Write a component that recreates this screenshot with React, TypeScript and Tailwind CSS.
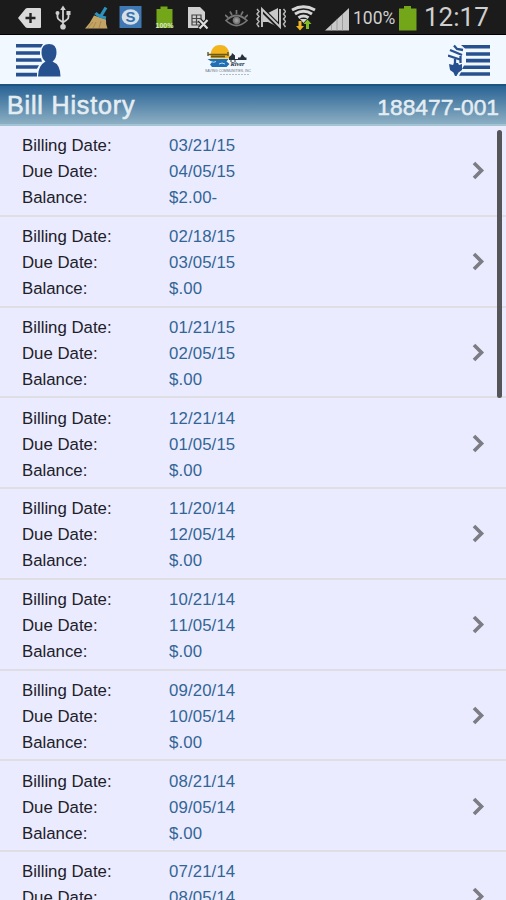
import React from 'react';

interface Bill {
  billingDate: string;
  dueDate: string;
  balance: string;
}

const bills: Bill[] = [
  { billingDate: '03/21/15', dueDate: '04/05/15', balance: '$2.00-' },
  { billingDate: '02/18/15', dueDate: '03/05/15', balance: '$.00' },
  { billingDate: '01/21/15', dueDate: '02/05/15', balance: '$.00' },
  { billingDate: '12/21/14', dueDate: '01/05/15', balance: '$.00' },
  { billingDate: '11/20/14', dueDate: '12/05/14', balance: '$.00' },
  { billingDate: '10/21/14', dueDate: '11/05/14', balance: '$.00' },
  { billingDate: '09/20/14', dueDate: '10/05/14', balance: '$.00' },
  { billingDate: '08/21/14', dueDate: '09/05/14', balance: '$.00' },
  { billingDate: '07/21/14', dueDate: '08/05/14', balance: '$.00' },
];

function StatusIcons() {
  return (
    <>
      {/* back tag */}
      <svg className="ml-[18px] h-[35px] w-6 shrink-0" viewBox="0 0 24 35">
        <path d="M0 18 7.5 8.8Q8.3 8 9.5 8H22q1 0 1 1v18q0 1-1 1H9.5q-1.2 0-2-.8Z" fill="#d9d9d9" />
        <path d="M12.5 13v10M7.5 18h10" stroke="#222" strokeWidth="2.4" />
      </svg>
      {/* usb */}
      <svg className="ml-[13px] h-[35px] w-4 shrink-0" viewBox="0 0 16 35" fill="none" stroke="#d0d0d0" strokeWidth="1.8">
        <path d="M8 9v18M2.5 14v3q0 2 2 3L8 22.5l3.5-2.5q2-1 2-3v-3" />
        <path d="m8 5.5 2.8 4.5H5.2Z" fill="#d0d0d0" stroke="none" />
        <circle cx="8" cy="26.8" r="2.8" fill="#d0d0d0" stroke="none" />
        <circle cx="2.5" cy="13" r="2" fill="#d0d0d0" stroke="none" />
        <path d="M11.5 11h4v4h-4z" fill="#d0d0d0" stroke="none" />
      </svg>
      {/* broom */}
      <svg className="ml-3.5 h-[35px] w-6 shrink-0" viewBox="0 0 24 35">
        <path d="M9 15.5 21 19.5q-.5 5 1.5 9H0q5-5 9-13Z" fill="#c4a464" />
        <path d="m8 28 3-6M14 28l2-7M3 28l5-6" stroke="#9d8048" strokeWidth="0.8" />
        <path d="m21 7.5-5.5 9M10.5 13q3 3.5 10.5 5" stroke="#2b91be" strokeWidth="3.2" fill="none" />
      </svg>
      {/* S badge */}
      <svg className="ml-[10px] h-[35px] w-[23px] shrink-0" viewBox="0 0 23 35">
        <path d="M.5 6h22v22H.5z" fill="#3f78b5" />
        <ellipse cx="11.5" cy="17" rx="8.8" ry="7.8" fill="#d5dfe6" />
        <text x="11.5" y="22.2" textAnchor="middle" fontFamily="Liberation Sans" fontWeight="700" fontSize="15" fill="#3470ae">S</text>
      </svg>
      {/* battery app */}
      <svg className="ml-[13px] h-[35px] w-[19px] shrink-0" viewBox="0 0 19 35">
        <path d="M1.5 9h4V6.5h7V9h5v19h-16z" fill="#74a619" />
        <text x="9.5" y="28" textAnchor="middle" fontFamily="Liberation Sans" fontWeight="700" fontSize="7" fill="#dce8c8">100%</text>
      </svg>
      {/* sim card with cross */}
      <svg className="ml-3.5 h-[35px] w-[21px] shrink-0" viewBox="0 0 21 35">
        <path d="M0 7h12l5 5v9l-5 7H0z" fill="#d0d0d0" />
        <path d="M4 15h9v10H4zM4 18.5h9M4 22h9M8.5 15v10" stroke="#444" fill="none" strokeWidth="1.2" />
        <path d="m11.5 20 8 8.5M19.5 20l-8 8.5" stroke="#1b1b1b" strokeWidth="4.5" />
        <path d="m11.5 20 8 8.5M19.5 20l-8 8.5" stroke="#ddd" strokeWidth="2.2" />
      </svg>
      {/* eye */}
      <svg className="ml-4 h-[35px] w-[23px] shrink-0" viewBox="0 0 23 35" fill="none" stroke="#777" strokeWidth="1.7">
        <path d="M1 20.5q10.5-10 21 0-10.5 10-21 0ZM11.5 10v4M5 11.5l2 3.5M18 11.5 16 15M0 15l3 2.5M23 15l-3 2.5" />
        <circle cx="11.5" cy="20.5" r="3" fill="#999" />
      </svg>
      {/* vibrate and mute */}
      <svg className="ml-[8px] h-[35px] w-[30px] shrink-0" viewBox="0 0 30 35" fill="none" stroke="#b8b8b8">
        <path d="m1 9 2 2.5L1 14l2 2.5L1 19l2 2.5L1 24l2 3M27.5 9l2 2.5-2 2.5 2 2.5-2 2.5 2 2.5-2 2.5 2 3" strokeWidth="1.5" />
        <path d="M7 13h5l10-5v19l-10-5H7z" fill="#c8c8c8" stroke="none" />
        <path d="m5.5 9 19 19" stroke="#1b1b1b" strokeWidth="5" />
        <path d="M6 27V9l18 18V9" stroke="#c8c8c8" strokeWidth="1.9" />
      </svg>
      {/* wifi */}
      <svg className="ml-[5px] h-[35px] w-[25px] shrink-0" viewBox="0 0 25 35" fill="none" stroke="#d6d6d6" strokeWidth="3">
        <path d="M1 10q11.5-6.5 23 0M4 14q8.5-5.5 17 0M7.5 17.7q5-3.5 10 0" />
        <path d="M9 19h7l-3.5 4z" fill="#d6d6d6" stroke="none" />
        <path d="M7.5 21h3v5H13l-4 4.5L5 26h2.5z" fill="#eeb620" stroke="none" />
        <path d="M15 29v-5h-2.5l4-4.5 4 4.5H18v5z" fill="#83bd25" stroke="none" />
      </svg>
      {/* signal */}
      <svg className="ml-[9px] h-[35px] w-6 shrink-0" viewBox="0 0 24 35">
        <path d="M0 30.5 24 8v22.5z" fill="#c9c9c9" />
        <path d="M6.5 24v7M12 19v12M17.5 14v17" stroke="#8a8a8a" strokeWidth="0.7" />
      </svg>
    </>
  );
}

function StatusBar() {
  return (
    <div className="flex h-[35px] shrink-0 items-center border-b border-black bg-[#1b1b1b] text-[#cfcfcf]">
      <StatusIcons />
      <span className="ml-[4px] w-[44px] pt-[3px] font-['Roboto'] text-[17.5px] leading-none whitespace-nowrap">100%</span>
      <svg className="ml-[2px] h-[35px] w-[18px] shrink-0" viewBox="0 0 18 35">
        <path d="M0 8.5h5V6h7v2.5h5.5v22H0z" fill="#74a619" />
      </svg>
      <span className="ml-[7px] font-['Roboto'] text-[26px] leading-none whitespace-nowrap">12:17</span>
    </div>
  );
}

function AccountIcon() {
  return (
    <svg className="h-[34px] w-[45px]" viewBox="0 0 45 34" fill="#27508f">
      <path d="M0 0h27l-2 3.6H0zM0 7.2h24v3.6H0zM0 14.2h25l1 3.6H0zM0 21.2h23l-2 3.6H0zM0 28.8h21v3.6H0z" />
      <path d="M22 32.4q0-11 7.5-15-4-3-4-9 0-8.400 7.5-8.400t7.5 8.400q0 6-4 9 8 3 8 15z" />
    </svg>
  );
}

function MenuIcon() {
  return (
    <svg className="h-[34px] w-[44px]" viewBox="0 0 44 34" fill="#27508f">
      <path d="M13 1h29v3.600H17zM18 8.200h24v3.600H18zM18 14.800h24v3.600H18zM16 21.500h26v3.600H14zM13 28.200h29v3.600H11z" />
      <path d="M1 20l4 1 1-2h4l1 2 3-1v6l-3.500 2.500-2 3.500H7l-1.500-3.500L2 26z" />
      <path d="M6 1.500l3 3.500 6 1M2 6l12 5M0 11.500l12 4M7 15v5M12.500 12v7" fill="none" stroke="#27508f" strokeWidth="2.300" />
    </svg>
  );
}

function Logo() {
  return (
    <svg className="h-[34px] w-[52px]" viewBox="0 0 52 34">
      <path d="M6.5 14.5Q6 1 16 1t9.5 13.5z" fill="#f2b51e" />
      <path d="M4 10.5h20M4 8v4M24 8v4" stroke="#66591f" strokeWidth="1.4" />
      <path d="M7 12.5h14" stroke="#66591f" strokeWidth="1.8" />
      <path d="M3.5 15h21l-2 2.500 3 2.500-3 3H8l-2-2.500 2-2.500z" fill="#216fb2" />
      <path d="M7 17.500q3 1.500 5 0M15 20q3-2 6 0" stroke="#b8dcf2" fill="none" />
      <path d="M25 16v-3l2.500-2 .5-2 3 2.500V16zM36 14l2-4 3.500 4zM34 13.500h8.500V16H34z" fill="#28323b" />
      <path d="M26 15.500h14M27 15v3M31 15v3" stroke="#28323b" />
      <text x="26.500" y="22" fontFamily="Liberation Serif" fontStyle="italic" fontWeight="700" fontSize="6.500" textLength="14" fill="#26333f">River</text>
      <text x="1" y="27.500" fontFamily="Liberation Sans" fontSize="4.300" textLength="46" lengthAdjust="spacingAndGlyphs" fill="#6d737b">SAVING COMMUNITIES, INC</text>
      <path d="M16 30.5h30" stroke="#9ea4aa" strokeWidth="0.7" strokeDasharray="2 1" />
    </svg>
  );
}

function BillRow({ bill }: { bill: Bill }) {
  const fields = [
    ['Billing Date:', bill.billingDate],
    ['Due Date:', bill.dueDate],
    ['Balance:', bill.balance],
  ];

  return (
    <li className="flex h-[90.75px] shrink-0 items-center border-b-2 border-[#dedee4] pr-[20px] pl-[22px]">
      <dl className="flex-1 pt-[4px] text-[16.8px] leading-[26px] [font-kerning:none]">
        {fields.map(([label, value]) => (
          <div key={label} className="flex">
            <dt className="w-[147px] text-[#202027]">{label}</dt>
            <dd className="tracking-[0.12px] text-[#326595]">{value}</dd>
          </div>
        ))}
      </dl>
      <svg className="h-[20px] w-[14px]" viewBox="0 0 14 20" fill="none" stroke="#7c7c82" strokeWidth="3.6">
        <path d="m2 3 7.500 7.500L2 18" />
      </svg>
    </li>
  );
}

export default function App() {
  return (
    <div className="flex h-[900px] w-[506px] flex-col overflow-hidden bg-[#ebebff] font-['Liberation_Sans',sans-serif]">
      <StatusBar />
      <header className="grid h-[49px] shrink-0 grid-cols-[188px_1fr_44px] items-start bg-[#f1f8ff] pt-[9px] pr-[14px] pl-[16px]">
        <AccountIcon />
        <Logo />
        <MenuIcon />
      </header>
      <div className="flex h-[42px] shrink-0 items-center justify-between border-t-2 border-b-2 border-t-[#1e5580] border-b-[#a3c4d4] bg-linear-to-b from-[#276394] to-[#8cafc3] pr-[7px] pl-[7px] text-[#e4edf2]">
        <h1 className="text-[25px] leading-none tracking-[0.85px] [-webkit-text-stroke:0.6px_#e4edf2]">Bill History</h1>
        <span className="pt-[4px] text-[22.8px] leading-none [-webkit-text-stroke:0.5px_#e4edf2]">188477-001</span>
      </div>
      <main className="relative min-h-0 flex-1 overflow-hidden">
        <ul className="flex flex-col">
          {bills.map((bill) => (
            <BillRow key={bill.billingDate} bill={bill} />
          ))}
        </ul>
        {/* scroll indicator */}
        <div className="absolute top-[4px] right-[4px] h-[268px] w-[5px] rounded-full bg-[#555559]" />
      </main>
    </div>
  );
}
